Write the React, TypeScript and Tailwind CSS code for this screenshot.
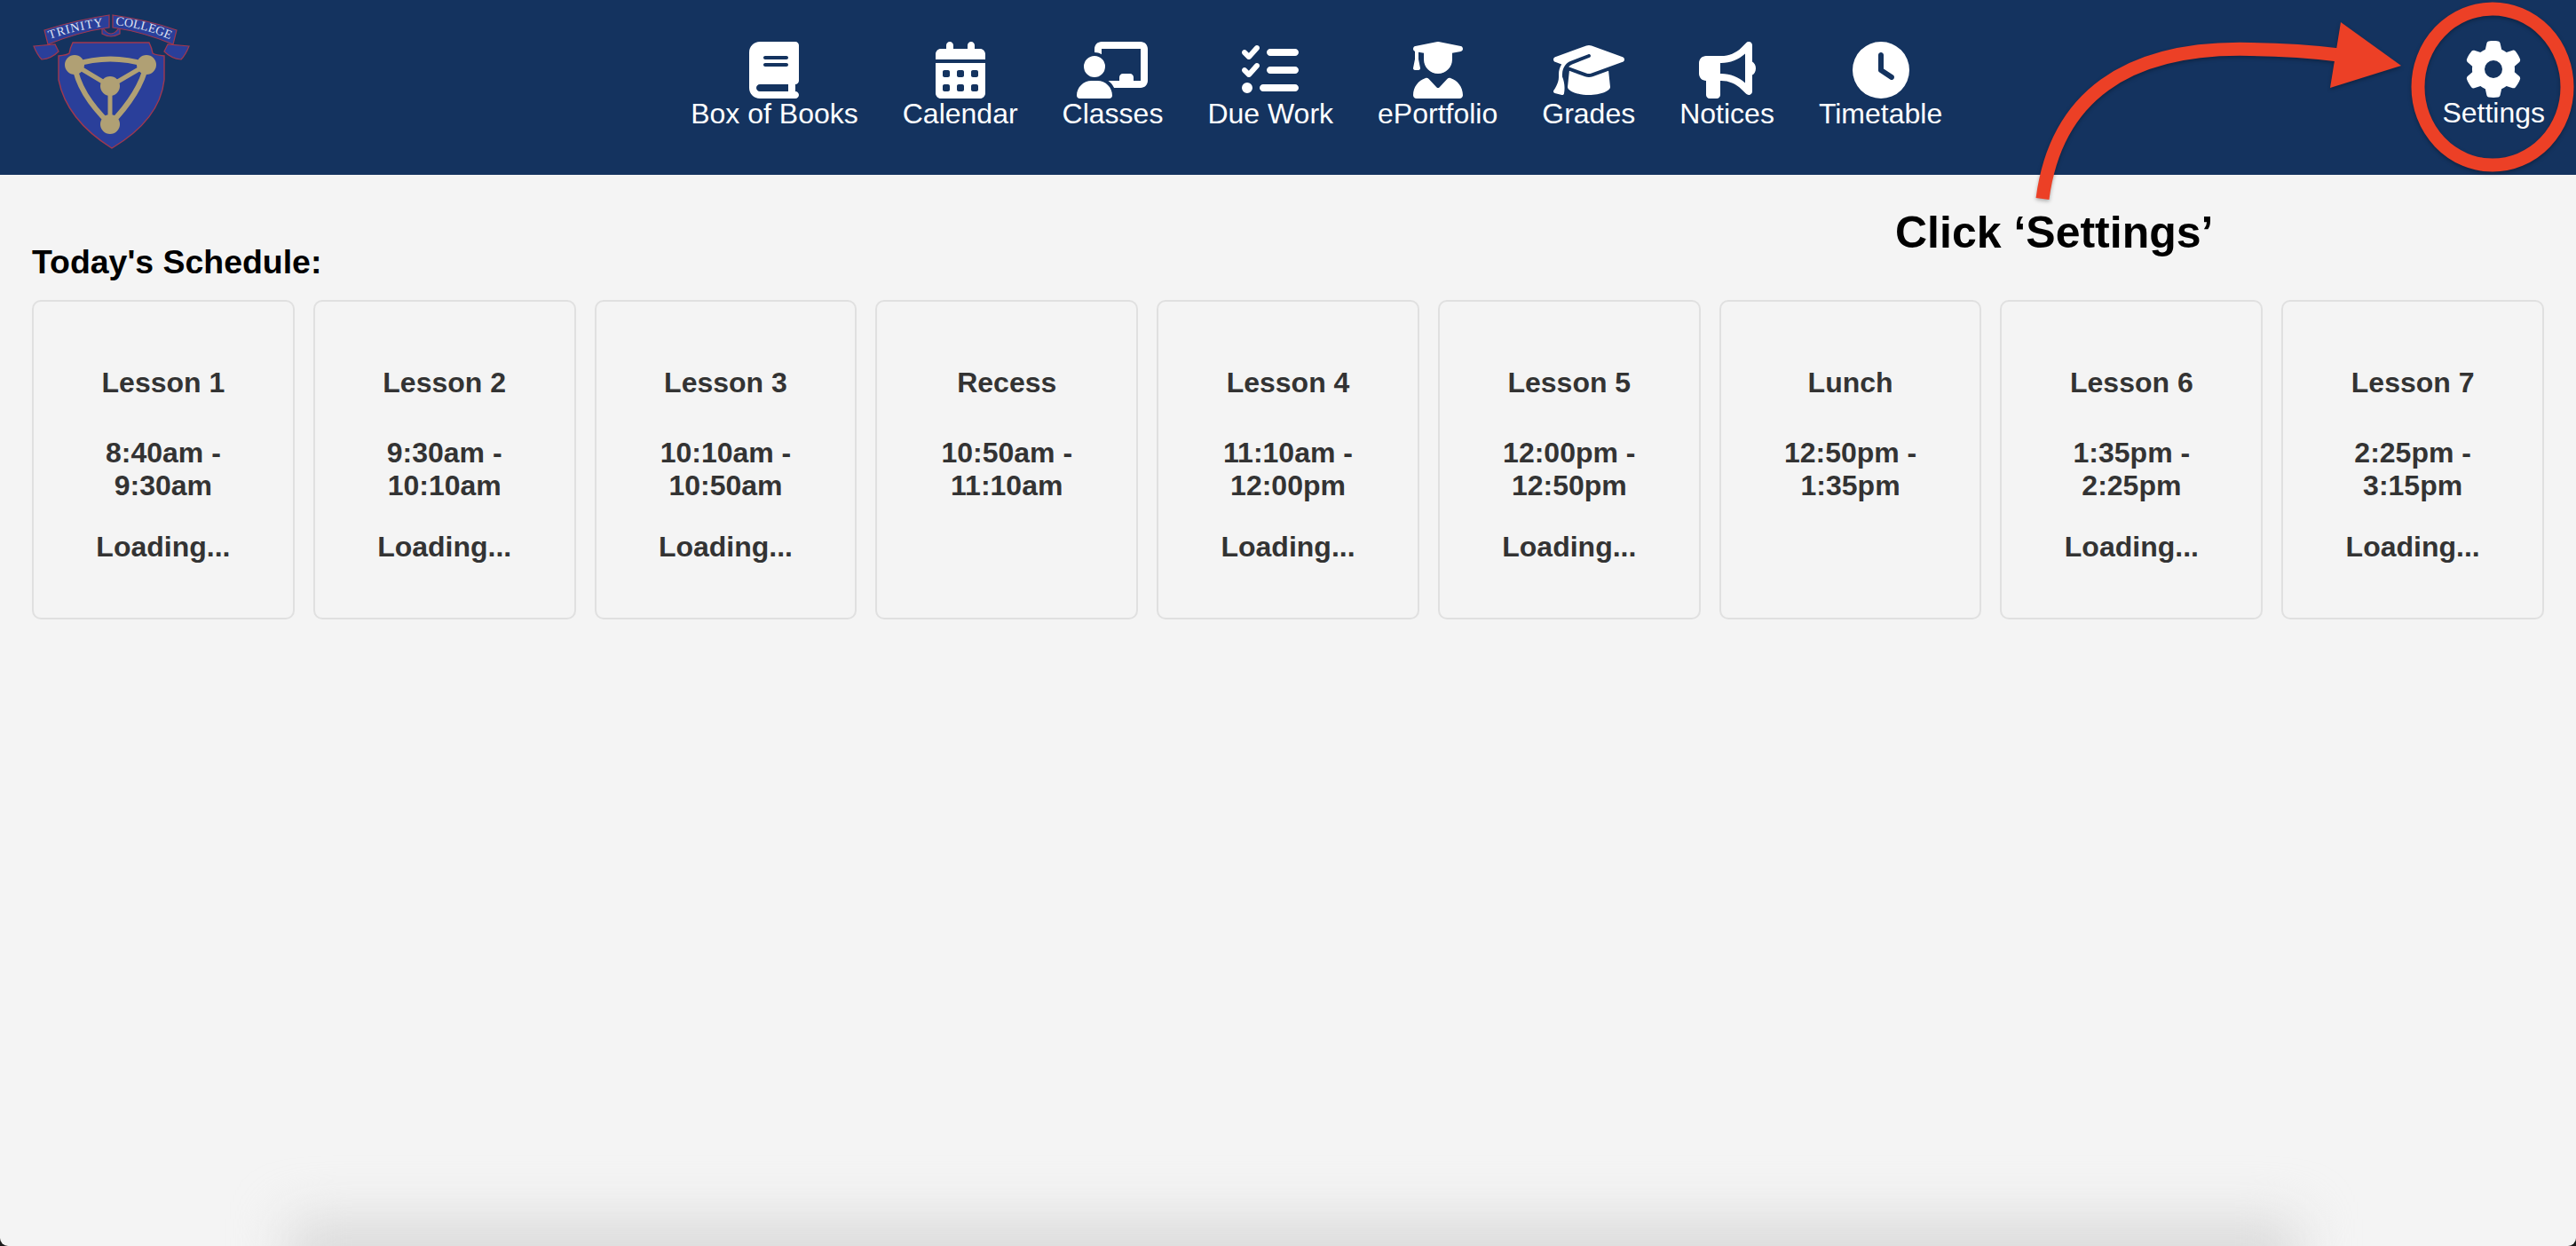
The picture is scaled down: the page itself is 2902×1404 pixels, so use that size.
import React from "react";
import {
  FaBook,
  FaBullhorn,
  FaCalendarDays,
  FaChalkboardUser,
  FaClock,
  FaGear,
  FaGraduationCap,
  FaListCheck,
  FaUserGraduate,
} from "react-icons/fa6";

const navItems = [
  { name: "Box of Books", icon: FaBook, size: "w-[56px]" },
  { name: "Calendar", icon: FaCalendarDays, size: "w-[56px]" },
  { name: "Classes", icon: FaChalkboardUser, size: "w-[80px]" },
  { name: "Due Work", icon: FaListCheck, size: "w-[64px]" },
  { name: "ePortfolio", icon: FaUserGraduate, size: "w-[56px]" },
  { name: "Grades", icon: FaGraduationCap, size: "w-[80px]" },
  { name: "Notices", icon: FaBullhorn, size: "w-[64px]" },
  { name: "Timetable", icon: FaClock, size: "w-[64px]" },
];

const periods = [
  { name: "Lesson 1", time: "8:40am - 9:30am", loading: true },
  { name: "Lesson 2", time: "9:30am - 10:10am", loading: true },
  { name: "Lesson 3", time: "10:10am - 10:50am", loading: true },
  { name: "Recess", time: "10:50am - 11:10am", loading: false },
  { name: "Lesson 4", time: "11:10am - 12:00pm", loading: true },
  { name: "Lesson 5", time: "12:00pm - 12:50pm", loading: true },
  { name: "Lunch", time: "12:50pm - 1:35pm", loading: false },
  { name: "Lesson 6", time: "1:35pm - 2:25pm", loading: true },
  { name: "Lesson 7", time: "2:25pm - 3:15pm", loading: true },
];

const Logo = () => (
  <svg width="215" height="197" viewBox="0 0 215 197" className="shrink-0 block">
    <defs>
      <path id="scroll-left" d="M56 44 Q88 33 120 29" />
      <path id="scroll-right" d="M130 28 Q165 32 195 46" />
    </defs>
    {/* ribbon tails */}
    <path d="M38 52 L62 50 L66 58 Q58 66 47 67 Q42 62 38 52 Z" fill="#2a3f9a" stroke="#a0384f" strokeWidth="1.2" />
    <path d="M213 52 L189 50 L185 58 Q193 66 204 67 Q209 62 213 52 Z" fill="#2a3f9a" stroke="#a0384f" strokeWidth="1.2" />
    <path d="M115 30 Q125 46 135 30 L135 38 Q125 44 115 38 Z" fill="#2a3f9a" stroke="#a0384f" strokeWidth="1.2" />
    {/* ribbon */}
    <path d="M50 34 Q88 22 123 17 L123 31 Q88 36 54 50 Z" fill="#2a3f9a" stroke="#a0384f" strokeWidth="1.2" />
    <path d="M127 17 Q165 22 199 34 L195 50 Q162 36 127 31 Z" fill="#2a3f9a" stroke="#a0384f" strokeWidth="1.2" />
    <text fontFamily="'Liberation Serif', serif" fontSize="14" fill="#dfe3f2" letterSpacing="1">
      <textPath href="#scroll-left">TRINITY</textPath>
    </text>
    <text fontFamily="'Liberation Serif', serif" fontSize="14" fill="#dfe3f2" letterSpacing="0">
      <textPath href="#scroll-right">COLLEGE</textPath>
    </text>
    {/* shield */}
    <path
      d="M66 63 Q76 62 78 60 Q79 54 82 48 L168 48 Q171 54 172 60 Q175 62 185 63 L185 90 Q180 135 126 167 Q75 135 66 90 Z"
      fill="#2a3f9a"
      stroke="#a0384f"
      strokeWidth="1.4"
    />
    <g stroke="#b0a074" strokeWidth="6" fill="none">
      <path d="M84 73 Q124 60 165 73" />
      <path d="M84 73 Q88 105 124 140" />
      <path d="M165 73 Q158 105 124 140" />
      <path d="M84 73 L124 97 L165 73 M124 97 L124 140" strokeWidth="5" />
    </g>
    <g fill="#b0a074">
      <circle cx="84" cy="73" r="11" />
      <circle cx="165" cy="73" r="11" />
      <circle cx="124" cy="97" r="11" />
      <circle cx="124" cy="140" r="11" />
    </g>
  </svg>
);

const App = () => {
  return (
    <div className="h-screen w-full bg-[#1c1c1c] font-['Liberation_Sans',Arial,sans-serif]">
      <div className="relative h-full w-full overflow-hidden rounded-b-[9px] bg-[#f4f4f4]">
        <header className="flex h-[197px] bg-[#14335f] pr-[35px] text-white">
          <Logo />
          <nav className="flex flex-1 justify-center gap-[50px] pt-[47px]">
            {navItems.map((item) => (
              <div key={item.name} className="flex flex-col items-center">
                <item.icon className={`h-[64px] ${item.size}`} />
                <span className="text-[32px] leading-[35px]">{item.name}</span>
              </div>
            ))}
          </nav>
          <div className="flex flex-col items-center pt-[46px]">
            <FaGear className="h-[64px] w-[64px]" />
            <span className="text-[32px] leading-[35px]">Settings</span>
          </div>
        </header>

        <main className="px-[36px] pt-[77px]">
          <h3 className="mb-[21px] text-[37.44px] font-bold leading-[43px] text-black">Today's Schedule:</h3>
          <div className="flex gap-[21px]">
            {periods.map((period) => (
              <div
                key={period.name}
                className="flex-1 rounded-[10px] border-2 border-[#e0e0e0] px-[30px] pb-[61px] pt-[73px] text-center text-[32px] font-bold leading-[37px] text-[#333333]"
              >
                <p>{period.name}</p>
                <p className="mt-[42px]">{period.time}</p>
                {period.loading && <p className="mt-[32px]">Loading...</p>}
              </div>
            ))}
          </div>
        </main>

        {/* shadow along the bottom edge */}
        <div className="absolute bottom-[-50px] left-[325px] right-[312px] h-[80px] bg-[#dadada] blur-[30px]" />

        {/* annotation */}
        <svg
          className="absolute left-0 top-0 drop-shadow-[0_2px_2px_rgba(0,0,0,0.3)]"
          width="2902"
          height="240"
          viewBox="0 0 2902 240"
        >
          <path d="M2301 224 C2316 110 2395 52 2535 55.5 C2575 56 2605 58 2635 62" fill="none" stroke="#ec4026" strokeWidth="15" />
          <path d="M2637 25 L2705 74 L2625 99 Z" fill="#ec4026" />
          <ellipse cx="2808" cy="98" rx="84" ry="88" fill="none" stroke="#ec4026" strokeWidth="15" />
        </svg>
        <div className="absolute left-[2135px] top-[234px] text-[50px] font-bold leading-[57px] text-black">
          Click ‘Settings’
        </div>
      </div>
    </div>
  );
};

export default App;
